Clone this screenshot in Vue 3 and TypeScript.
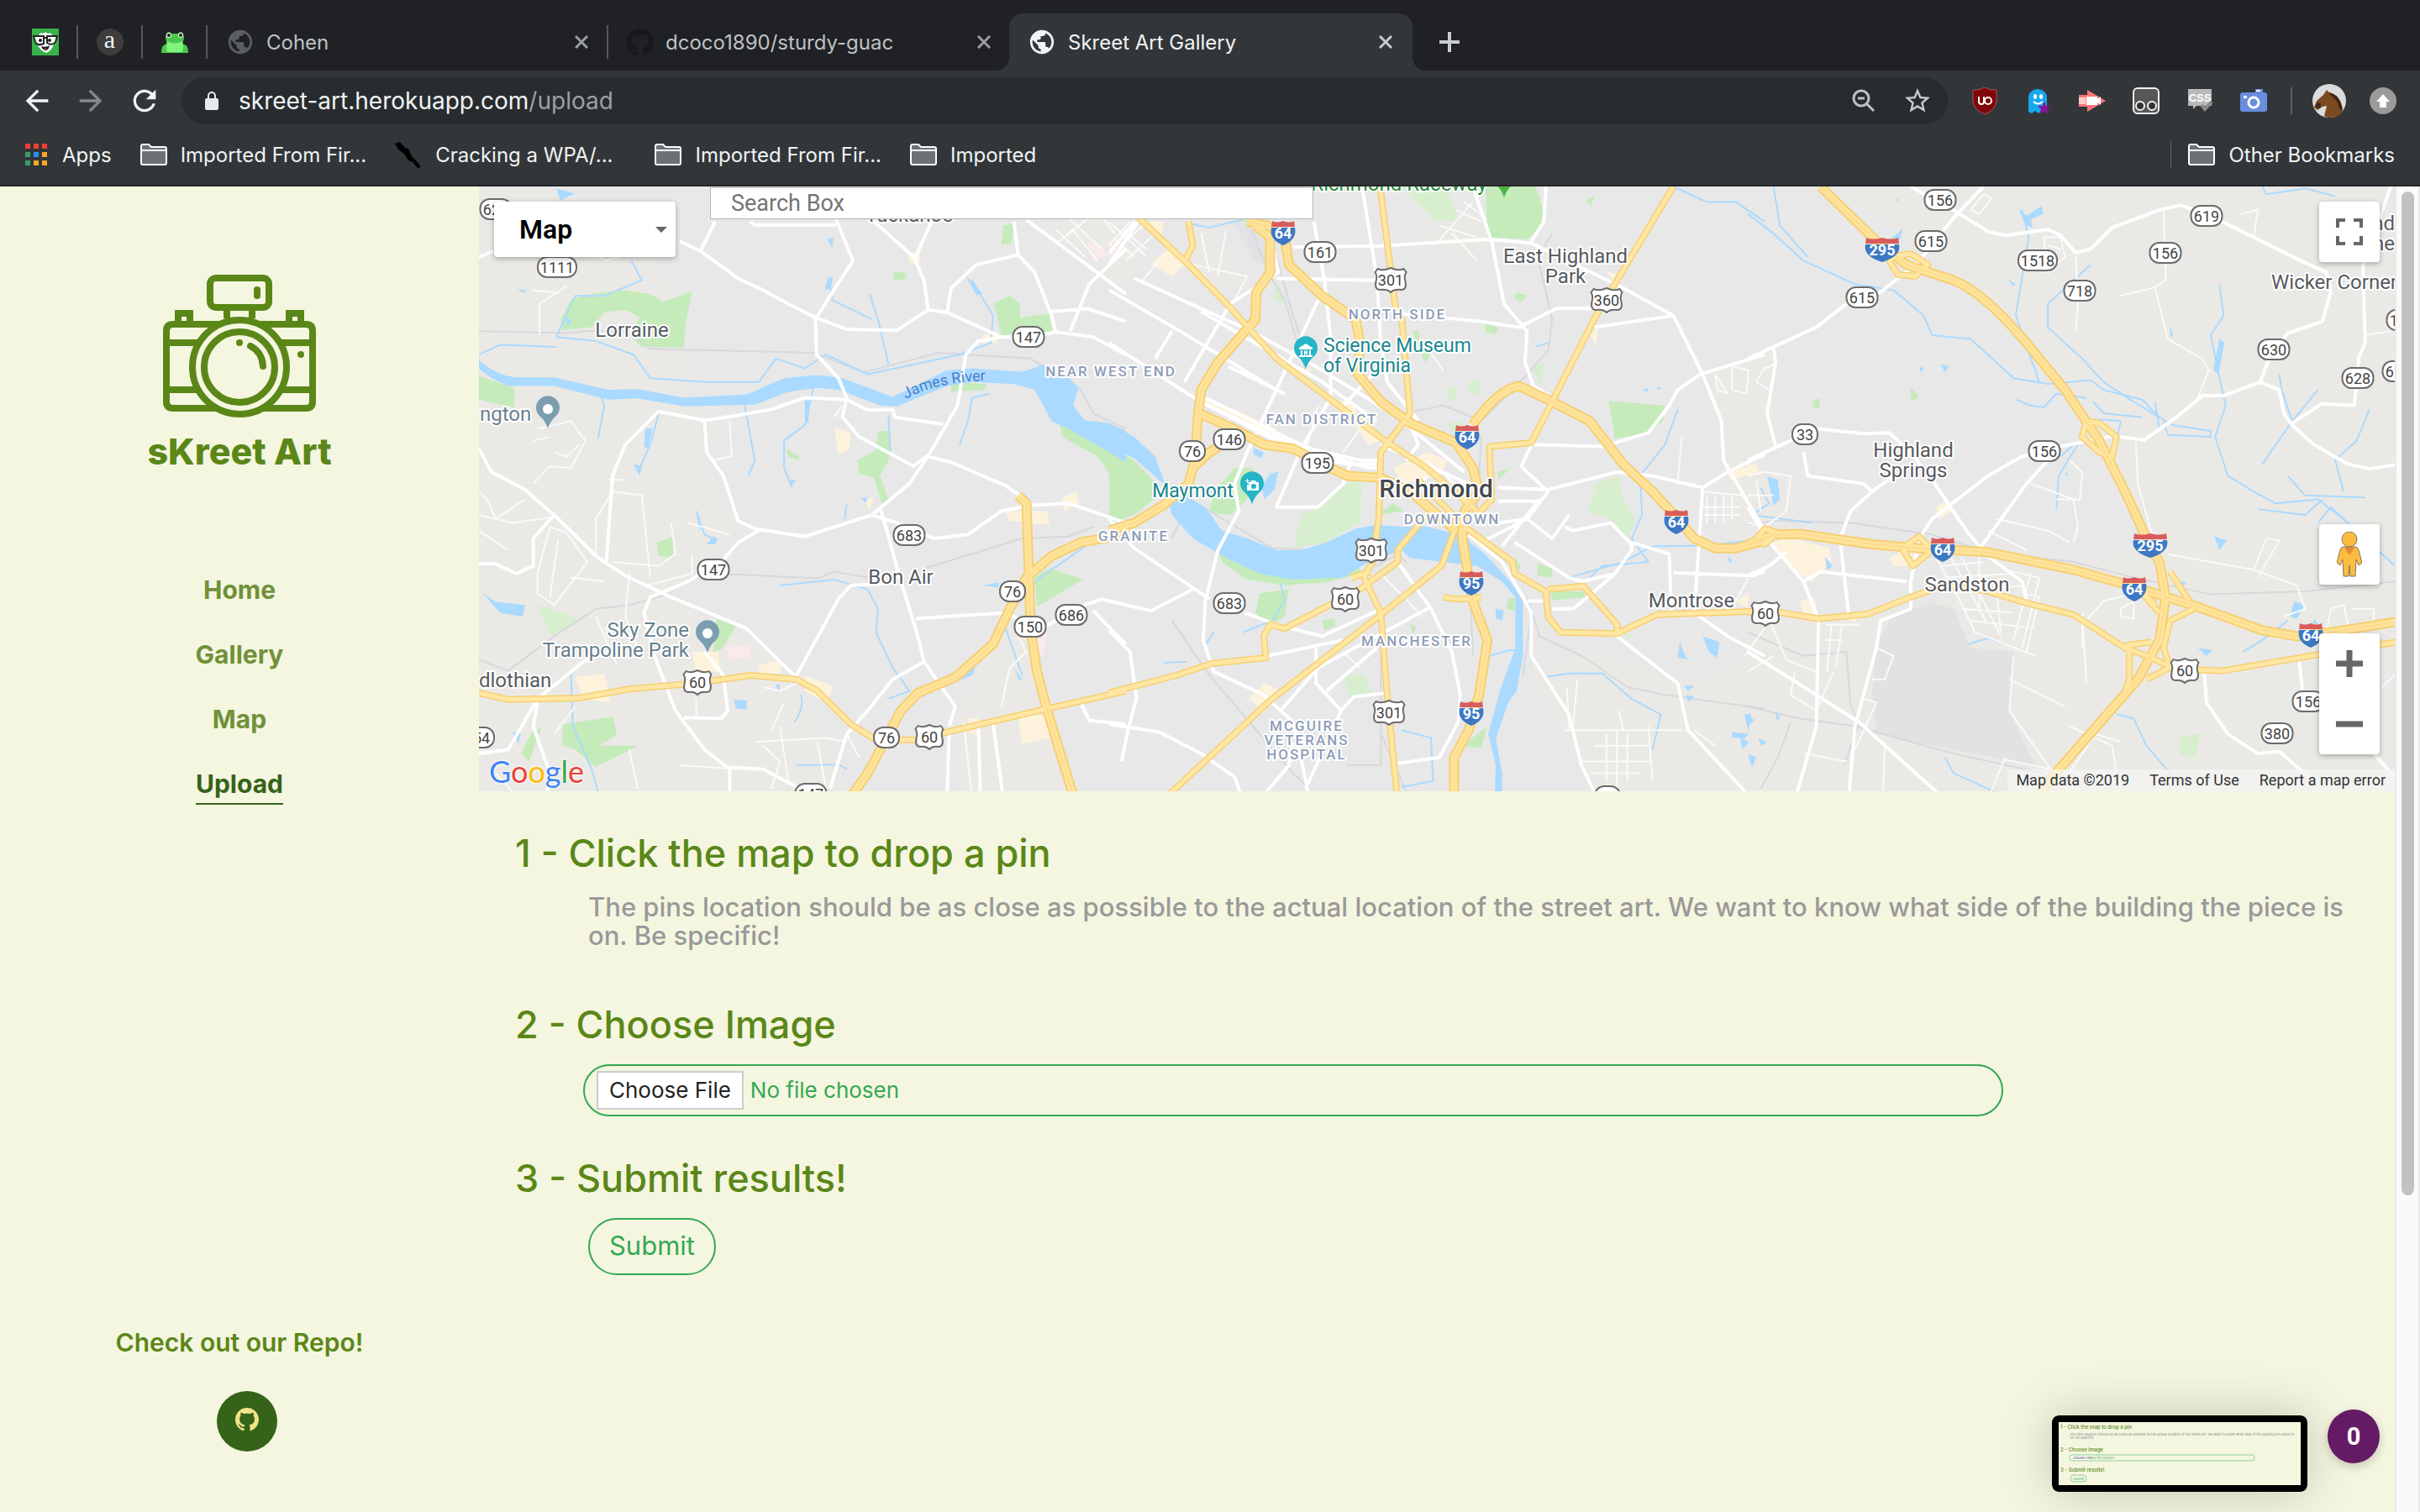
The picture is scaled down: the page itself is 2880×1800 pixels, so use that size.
<script setup lang="ts">
import { ref } from 'vue'

type TileId = 'A' | 'B' | 'C'

interface Tile {
  id: TileId
  x: number
  scale: number
  rural: string
  dark: string
  parks: string
  pale: string
  commercial: string
  medical: string
  lakes: string
  streams: string
  river: string
  rails: string
  streets: string
  roads: string
  highways: string
  freeways: string
}

interface Label {
  tile: TileId
  x: number
  y: number
  lines: string[]
  kind: 'town' | 'city' | 'area' | 'poi' | 'teal' | 'park'
  anchor?: 'start' | 'middle' | 'end'
}

interface Shield {
  tile: TileId
  x: number
  y: number
  text: string
  kind: 'state' | 'us' | 'interstate'
}

const TILE_Y = 0.4656

const tiles: Tile[] = [
  {
    id: 'A',
    x: -10,
    scale: 0.4974,
    rural:
      'M20,0V1568H910L850,1400 700,1180 480,1050 640,870 560,700 625,600 508,540V300L400,120 230,80 180,0z M1180,1568L1160,1360 1250,1160 1340,1120 1350,1300 1430,1568z M1390,130L1470,40 1568,60V220z',
    dark: '',
    parks:
      'M215,340L240,290 300,272 370,265 430,275 460,295 500,280 530,268 515,350 510,412 410,410 380,380 405,335 370,315 320,322 290,360 220,368z M20,485L105,515V565L20,545z M1252,300L1290,278 1315,300V335L1385,325 1392,370 1270,380z M1275,100L1300,95 1295,145 1270,150z M975,625H1005L1000,700 980,740 1000,800 985,815 965,745 930,735 925,700 970,675z M445,910L485,895V950L450,945z M1385,975L1465,1005 1355,1075 1350,1000z M590,1105L635,1125 600,1185 580,1190z M220,1375L340,1355 350,1400 310,1430 400,1430 300,1485 250,1440 220,1430z M150,1390L170,1385 140,1470 120,1450z M1410,610L1440,620 1528,665 1568,700V850L1530,845 1550,770 1500,690 1415,640z M1150,500L1235,505 1230,520 1150,525z M1015,218L1045,222 1038,240 1010,238z M755,670L785,690 785,700 760,690z',
    pale: 'M155,1070L265,1105 195,1150z',
    commercial:
      'M870,615L910,630 905,675 880,685z M250,1255L320,1245 335,1320 270,1310z M530,1190H590L600,1240 540,1240z M690,1225L740,1210 745,1245 690,1245z M800,1250L870,1280 850,1320 800,1290z M1280,830H1380L1385,865 1290,855z M1310,1355L1380,1350 1385,1410 1320,1425z M1050,170L1075,165V200L1050,195z M1415,795L1450,780 1455,810 1420,830z M940,800L965,795 955,830z M1225,380L1260,370 1260,400 1225,400z M1190,1360L1215,1360 1215,1400 1195,1400z',
    medical:
      'M610,1180L675,1170 665,1205 620,1210z M1475,140L1510,150 1525,175 1490,190z M1350,1140H1378L1370,1200 1350,1200z',
    lakes:
      'M205,5L250,18 215,35z M855,135L868,130 865,158z M1185,228L1225,275 1210,278z M418,620L435,618 425,670 415,665z M390,710L410,715 405,740z M30,1040L60,1062 130,1070 125,1100 70,1090z M800,545L812,550 808,605 800,600z M935,795L950,795 945,810z M1195,1215L1213,1215 1200,1250 1165,1265z M855,235L868,230 860,262 848,262z M112,262L135,266 125,271z M540,830L552,880 545,870z M580,895L592,900 586,915 565,915z M1225,1020L1265,1012 1262,1025z M630,1312L662,1315 660,1338 635,1335z M1300,1230L1320,1262 1312,1262z M100,1395L120,1400 115,1425z M225,335L240,340 235,360z M760,750L780,752 765,765z M730,1275L740,1272 738,1295z',
    streams:
      'M385,190L410,240 320,280 250,280 205,385 300,395 390,430 430,490 560,500 690,500 730,440 800,465 850,430 M955,275L975,340 1000,455 M860,250L865,290 960,340 M310,530L320,560 305,645 M655,555L680,700 665,740 M820,515L800,610 750,650V720L770,770 M1200,240L1250,330 1245,400 1170,430 950,480 850,430 M1000,585L1005,690 M1240,530L1200,540 1190,600 1170,660 M740,1020L870,1005 950,1030 975,1080 970,1140 1010,1230 1050,1290 1000,1310 M240,1240L245,1380 290,1490 310,1568 M450,580L430,660 400,730 M20,430L70,405 205,410 M900,810L895,850 M540,830L560,890 580,900 M1330,1070L1350,1010 1430,950 1490,905 M1320,1250L1290,1160 1280,1130 M790,1300Q800,1330 775,1370 M780,1480L880,1478 900,1490',
    river:
      'M10,435Q60,485 110,488L200,488 330,520 400,518 510,540 660,532 750,490 830,482 890,490 1010,538 1140,470 1200,465 1320,474 1370,456 1425,482 1455,515 1442,560 1470,598 1528,605 1568,625V705L1528,680 1440,625 1390,600 1350,520 1300,505 1200,500 1140,510 1020,562 980,560 880,520 830,515 760,525 680,558 510,562 400,542 330,545 200,510 90,510 50,490 10,458z',
    rails:
      'M20,370L230,375 300,368 380,372 430,415 820,425 940,475 1120,425 1340,440 1460,520 1490,580 1568,620 M20,1210L90,1238 200,1150 300,1080 380,1070 480,1040 M600,990L830,1002 870,985 950,1000 M1090,975L1320,900 1430,895 1490,870',
    streets:
      'M165,380V300L230,255 M150,265L210,272 M160,620L240,600 275,650 240,720 190,715 150,760 M190,640L150,650 M200,680L230,690 260,660 M20,840L100,860 200,845 M300,945V850L340,780 410,790 430,1000 M160,990L190,870 230,885 280,960 200,1070 160,1040z M210,900L190,1050 M340,960L450,970 490,940 480,860 M130,800L60,850 M520,860L620,890 M380,990L370,1100 400,1180 M300,1100L340,1200 350,1220 M320,1130L400,1150 M20,880L90,930 M240,1000L320,1010 M250,1330L200,1400 M700,1280L740,1290 780,1270 M720,1390L750,1320 M540,1310V1360 M680,1420L850,1410 900,1420 M760,1520L740,1380 M900,1400L930,1460 M700,1430L740,1470 720,1540 M1270,1330L1290,1230 1330,1190 1300,1130 M1180,1370L1200,1568 M1400,150L1440,110 1500,190 M1420,130L1540,30 M1430,80L1510,160 M1440,60L1480,30 1540,120 M1400,110L1470,180 M1450,100L1420,70 M870,590L890,560 M300,170L320,190 360,180 M620,600L625,690 580,700 M330,750H365 M20,780L40,800 60,850 M380,1440L400,1540 M830,1420L850,1540 M500,1480L640,1490 M420,1020L530,990 530,940 M60,1500L110,1560',
    roads:
      'M500,140L550,165 640,235 700,265 760,300 825,335 900,365 1020,368 1095,315 1140,322 1270,385 1340,385 1400,372 1490,385 1568,430 M585,90L550,165 M670,90L680,98 875,98 M875,85L915,190 860,280 825,340 828,430 880,490 900,540 890,590 930,640 1060,715 1090,690 1150,705 1280,765 1320,795 M1270,385L1215,395 1185,430 1165,560 1100,680 1050,760 960,840 800,895 680,875 640,855 605,740 565,680 560,600 M960,85L1060,180 1085,240 1095,315 M1105,85L1065,180 M1140,322L1150,260 1210,200 1310,175 1350,220 1390,330 1400,372 M1300,90L1310,175 M1330,85L1568,275 M1568,160L1480,250 1435,370 M1390,320L1475,312 1568,345 M20,670L50,730 130,775 210,850 300,945 370,995 480,1050 660,1130 740,1215 790,1265 M450,575L560,598 640,585 720,570 800,540 900,545 950,572 1010,570 1015,590 1130,608 M450,575L370,660 340,740 325,960 M690,880L640,910 605,955 520,1010 430,1050 415,1090 440,1200 490,1340 560,1440 620,1490V1568 M960,840L1020,860 1110,900 1190,890 1270,830 1340,815 1430,810 1568,860 M980,820L1030,1010 1070,1150 1085,1215 1160,1330 1145,1380 M780,1250L880,1055 910,1020 1000,1015 M1065,1105L1130,1100 1280,1090 1320,1110 M1375,1125L1470,1070 1510,1055 1568,1070 M1490,1085L1568,1170 M1085,1215L1010,1260 950,1340 900,1400 860,1540 M160,1320L150,1380 190,1500 180,1568 M20,965L60,965 110,990 150,970V900L200,840 M560,1190L605,1250 615,1340 600,1360 510,1358 M20,1450L90,1440 160,1310 270,1215 330,1190 M1145,1400L1140,1568 M1215,1380L1220,1568 M1250,1370L1275,1568 M1460,1320L1480,1365 1568,1375 M620,1485L700,1490 780,1535 M20,180L55,165',
    highways:
      'M20,1295L90,1312 260,1308 380,1285 540,1270 670,1250 780,1260 830,1290 910,1375 970,1415 1070,1415 1140,1395 1380,1335 1568,1290',
    freeways:
      'M1310,790L1330,810 1335,960 1340,1130 1355,1240 1380,1340 1445,1568 M1568,890L1460,910 1390,945 1330,1000 1290,1080 1250,1170 1160,1255 1070,1295 1030,1340 990,1420 950,1500 905,1568',
  },
  {
    id: 'B',
    x: 750,
    scale: 0.4974,
    rural:
      'M1000,1240L1180,1568H1568V1180L1400,1280 1180,1190z M1568,440L1420,480 1460,620 1480,900 1568,910z M190,110L260,110 310,200 340,250 250,270 190,200z M760,120L870,60 910,140 860,190 780,150z M0,60L90,110 60,235 0,260z',
    dark: 'M290,80L330,100 370,140 380,210 345,190z',
    parks:
      'M900,0H1020L1040,60 1030,110 1000,135 905,130z M0,665L60,700 130,780 60,840 0,860z M250,780L300,720 345,720 330,800 290,840 240,835z M255,910L290,950 400,990 560,1000 600,940 600,990 520,1012 420,1020 330,1005 270,960z M360,1040L430,1030 420,1100 380,1125 350,1090z M1195,548L1330,560 1325,600 1290,630 1210,645z M845,1430L905,1380 890,1435z M1025,965L1060,975V1000L1025,995z M1055,1035H1135L1140,1050 1060,1058z M640,840L680,810 705,830z M900,350L930,360 925,378 900,372z M975,270L1000,280 985,297 970,285z M725,370L740,368 745,420 770,430 755,450z M510,1110L540,1105 540,1125 515,1135z M720,1115L735,1130 725,1145z M970,950L985,970 980,985z M955,1055L975,1050 970,1085 950,1080z M1140,35L1160,25 1152,50z M690,890L740,870 690,940z M930,730L960,720 930,750z M310,85H380L350,100z',
    pale: 'M700,0L810,10 835,85 780,90z M460,840L520,800 580,750 605,760 600,860 520,910 440,925z M1165,760L1220,740 1230,800 1260,850 1240,900 1200,850 1145,830z M560,1250L610,1245 630,1300 575,1315z M860,495L890,500 885,535 858,525z M810,510L830,512 828,548 810,540z M1010,455L1042,450 1030,510z M395,270L405,250 420,295 395,295z M810,605L840,600 860,640 820,630z M1230,1140L1250,1145 1240,1160z',
    commercial:
      'M1480,730L1550,710 1555,730 1485,750z M680,720L760,680 810,700 790,740 700,760z M550,550L580,545 600,600 650,650 620,660z M100,200L140,160 180,200 150,230z M70,90H130L125,130z M335,1310L370,1270 415,1290 370,1345z M1150,380L1170,360 1165,410z M230,540L300,570 400,620V640L230,560z M1190,215L1215,225 1210,250z M1500,1060L1530,1040 1528,1080z M430,470L480,460 480,485z',
    medical: 'M0,140L40,180 0,185z',
    lakes:
      'M345,668L370,680 365,695 345,685z M385,735L405,728 395,775 370,800 365,765z M925,1080L945,1085 940,1110 925,1105z M1420,1150L1460,1165 1455,1205 1435,1190z M1365,1165L1380,1205 1395,1210 1360,1205z M1480,945L1490,955 1485,965z M1278,518L1292,515 1285,525z M1310,515L1322,512 1315,522z M1375,1275L1400,1278 1385,1290z M1490,1395L1530,1400 1520,1412 1490,1408z M1380,1300L1400,1305 1385,1318z M1520,1350L1535,1348 1530,1395z M1510,1410L1530,1420 1515,1440z',
    streams:
      'M1350,0L1430,40 1500,40 1568,90 M1360,570L1330,660 1270,740 1275,840 1250,900 1290,960 1180,970 1140,1010 M1100,1000L1230,960 1300,920 1440,918 1568,900 M190,95L240,105 320,85 M410,1015L420,1060 390,1110 320,1140 M1040,1255L1100,1245 1180,1245 1250,1310 1320,1350 1300,1440 M900,1260L910,1200 960,1185 990,1190 M700,1390L770,1410 775,1520 700,1535 M1020,410L1050,400 M250,1140L225,1180 M130,1218L185,1215',
    river:
      'M0,605L60,640 110,690 130,750 180,790 230,820 270,880 330,900 400,930 460,930 520,910 590,875 640,865 700,870 760,870 840,890 900,940 960,1010 990,1060V1200L975,1290 955,1320 925,1410 940,1500V1568H922L925,1480 907,1400 935,1290 972,1180 972,1050 940,1010 880,970 800,960 720,950 700,930 620,960 560,1000 440,1005 360,990 280,950 200,900 150,840 130,760 60,695 0,665z',
    rails:
      'M400,180L440,330 480,460 M185,820L150,900 M240,900L400,970 M880,830L890,650 870,590 800,560 730,575 M1060,120L1025,180 1060,340 1050,420 1000,480 890,600 M1000,1050L1030,1150 1130,1200 1240,1280 1330,1300 1568,1335 M1010,1090L990,1250 M150,1110L240,1250 440,1500 480,1540 M860,900L870,1200 M710,960L690,940 640,970 520,930 390,925 240,830 180,800 M650,1200V1480H570 M650,1400L720,1568 M340,110L380,220 420,290 470,470',
    streets:
      'M0,90L90,180 M20,160L80,100 M40,190L110,120 M10,130L60,180 M30,110L90,160 M50,90L0,150 M80,240L120,190 M200,200L330,230 300,290 M220,120L240,220 M280,110L260,230 M780,150L870,40 M790,100L880,130 M830,60L890,90 M850,40L900,80 M820,120L880,190 M1370,640L1360,760 1400,760 M1415,780L1520,790 M1430,790V860 M1450,790V860 M1470,790V860 M1490,790V850 M1420,820H1510 M1425,840H1510 M1450,480L1480,530 1455,520z M1490,460L1530,470 1525,530 1490,520z M1090,1390H1370 M1190,1400V1520 M1215,1390V1540 M1240,1400V1520 M1160,1430H1290 M1130,1470H1300 M1150,1500H1270 M1220,1340L1230,1390 M1290,1380L1300,1520 M1095,1280L1100,1390 M1120,1260L1110,1380 M750,400L800,470 M650,990L750,1100 M560,1190L600,1230 M800,730L820,760 M760,700L830,760 M600,620L560,680 M500,560L470,680 M360,620L330,680 M290,590L270,640 M1520,1200L1568,1130 M1050,1060L1060,1120 M1400,1390L1450,1430 M1530,1000L1500,1060',
    roads:
      'M440,155L650,152 910,135 1010,145 1230,260 1350,330 1420,480 1465,600 1470,700 1568,880 M490,90L515,240 530,390V540 M400,235L640,240 M605,0L640,230 650,400 665,500 740,600 M870,0L915,140 945,300 1000,370 995,450 1015,510 1060,540 M690,325L890,345 980,360 1070,312H1165 M1160,360L1350,330 M0,265L170,370 400,520 M0,400L210,545 470,690 570,710H640 M150,370L110,440 M0,170L60,90 M60,235L340,370 M500,290L400,520 330,680 300,760 310,830 260,930 230,1060 225,1160 250,1240 370,1300 440,1370 480,1568 M390,150L405,220 290,300 180,500 M285,460L420,530 M220,320L510,500 640,600 M340,370L510,470 720,610 740,660 710,700 M640,470L560,560 M530,540L460,670 400,820H500L560,760 580,700 M230,540L420,640 480,670 600,700H650 M235,560L440,660 620,720H650 M650,660L880,770 M700,600L850,730 M930,770L1050,775 1215,730 1300,740 1420,770 1480,730 1568,685 M990,720L1050,780 1000,850 900,905 M930,805H1030 M930,860L1000,850 1060,900 1100,840 M1015,660L1180,665 1290,630 1340,560 1360,520 1415,480 1568,430 M985,720L1010,660 M860,890L940,960 985,1040 1010,1090V1200L1100,1350 1130,1480 1170,1568 M690,960L770,1080 820,1190 840,1300 835,1370 790,1460 690,1475 M0,1060L100,1085 200,1030 M60,925L240,1055 M325,1090L400,1120 510,1150 650,1080 M0,850L60,925 M380,1200L560,1160 M495,1180V1270L555,1340 M410,1340L500,1230 770,1075 M520,1290L640,1180 M0,1135L50,1190 65,1310 45,1390 30,1470 M0,1375L120,1395 220,1450 300,1510 320,1568 M360,1568L430,1480 440,1420 M470,1540L555,1340 585,1305 660,1295 M970,910L1100,1000 1130,1010 1210,990 1250,930V910L1340,940 1345,1090 M1090,870L1110,880 1200,860 1250,915 M1350,988L1540,995 1568,985 M1420,770L1400,1090 1480,1150 1568,1200 M1060,1080H1110L1150,1045 1210,990 M1215,1150L1360,1270 1385,1390 1540,1568 M1030,800L940,920 M1045,0L1040,90 1010,140 M1000,1060H1050 M0,200L100,40 M760,740L720,800',
    highways:
      'M70,80L190,200 290,310 400,440 530,545 660,650 760,720 880,830 M740,750L850,870 965,960 970,990 1045,1035 1050,1100 1080,1140 1215,1143 1310,1095 1568,1085 M190,90L200,150 180,195 M648,0L685,310 700,340 720,580 650,680 645,850 630,960 610,1000 650,1090 665,1300 690,1568 M1350,0L1215,240 1165,330 1060,550 1010,655 910,665 915,800 880,840 M0,1295L160,1250 245,1220 375,1205 370,1150 385,1120 420,1130 600,1030 690,960V930L760,840 M130,1568L390,1310 650,1095 795,970 830,870 M1050,1030L1135,1022 1215,1120V1143 M800,1050Q840,1060 890,1050 M580,1000L625,985',
    freeways:
      'M350,100L385,130V220L352,270 350,340 260,450 220,520 212,590 205,700 190,760 130,815 60,860 0,880 M420,130L430,200 510,280 590,340 600,400 595,480 650,550 720,605 830,655 870,720 885,780 850,830 845,900 860,1000 870,1060 905,1160 885,1300 860,1390 825,1460V1568 M870,610Q930,520 980,510L1060,550 1150,600 1230,710 1300,780 1360,850 1400,900 1450,925 1500,925 1568,905 M215,580L300,620 370,660 440,670 510,710 570,740 650,745 720,780 830,880 M330,90L380,100 420,130 M205,715L240,680 290,645',
  },
  {
    id: 'C',
    x: 1510,
    scale: 0.5102,
    rural:
      'M210,0L560,300 730,520 850,720 940,920 760,960 600,910 420,1080 330,1090 200,1110 0,1110V1568H1512V0z M0,700L100,740 120,860 0,860z M0,440L60,420 60,660 0,700z',
    dark: 'M290,1290L300,1170 340,1090 430,1065 480,1080 520,1180 620,1190 610,1340 670,1480 480,1440 300,1400z',
    parks:
      'M152,545L168,543 167,567 152,565z M380,515L398,535 388,550 380,540z',
    pale: 'M1010,1405L1055,1400 1045,1460 1008,1455z',
    commercial:
      'M50,915L90,895 190,925 195,960 150,1010 100,980z M330,950L380,920 390,970 340,970z M440,820L465,800 475,830 445,852z M120,1060L155,1050 165,1100 130,1090z M220,1095L260,1090 250,1115z M0,710L25,712 0,740z',
    medical: '',
    lakes:
      'M630,55L650,75 685,50 690,70 660,85 665,105 650,100z M45,740L70,750 75,800 60,815z M332,135L362,108 355,135z M1100,390L1112,400 1098,480 1086,470z M1088,895L1118,905 1100,930z M1275,1060L1300,1072 1280,1105 1265,1100z M1050,1180L1085,1185 1070,1200z M180,945L198,970 185,980z M985,355L992,380 986,385z M450,455L470,460 460,475z M605,235L625,250 618,255z M1005,1010L1025,1012 1010,1025z M0,1350L15,1365 5,1375z M25,1410L45,1420 30,1430z M65,1340L75,1360 68,1365z M0,1450L20,1460 10,1485z M1320,1105L1332,1120 1318,1118z M400,460L412,465 402,475z M345,35L352,30 349,38z M740,730L748,735 742,740z',
    streams:
      'M0,70L60,120 130,190 250,250 340,265 410,330 430,380 520,390 620,490 700,505 800,495 830,520 920,545 960,590 M60,0L75,100 140,180 M640,60L655,130 625,330 680,500 M800,200L700,300V360L780,440 830,500 900,550 990,610 1080,625 1080,640 980,635 970,600 M1100,250L1110,330 1080,380 1100,490 1115,560 1090,640 1120,740 1180,780 M1450,570L1420,650 1370,700 1390,780 M1330,520L1270,600 1200,710 M1180,780L1230,810 1330,800 1400,860 1480,940 1509,970 M1190,825L1300,840 1340,800 M1260,740L1300,790 1440,795 M1400,860L1360,820 1330,860 M860,1350L900,1360 930,1430 985,1500 M460,1460L480,1500 600,1560 M515,1170L560,1155 600,1170 M625,545L660,560 690,565 720,530 790,540 M805,550L830,580 920,590 M1200,0L1210,20 1300,5 1370,25 M1155,1190L1200,1160 1260,1110 M720,825L725,740 770,660 M730,690L760,660 M30,770L50,810 10,840 150,860 M950,550L960,620 M1240,480L1245,520 1270,600 M820,595L870,600 860,650',
    river: '',
    rails:
      'M0,865L60,855 240,860 430,890 560,935 760,960 900,1000 1080,1043 1300,1035 1509,1010 M0,1330L120,1360 250,1380 480,1450 690,1500 M0,1140L130,1200 230,1190 240,1330 260,1370 225,1480 M100,1370L70,1460 30,1540',
    streets:
      'M40,460L20,500 50,520 M60,455L35,470 M520,60L550,20 570,30 540,70z M690,130L730,130 740,180 700,220z M700,150L730,160 M765,180L770,300 765,370 M970,60L975,240 945,260 865,280 M950,260L980,390 1060,440 1075,470 1050,540 M905,655L910,760 950,920 M660,760L760,800 770,870 760,910 M750,700L780,730 775,800 720,800 M580,850L700,880 750,910 M560,880L650,930 M1180,130L1190,60 1150,70 M1180,980L1210,900 1240,905 1190,1000 M980,940L1180,980 1280,1020 1300,1080 1250,1100 M440,950L500,1070 530,1140 670,1200 M470,940L560,1120 M500,950L590,1150 M450,970L550,960 M460,1000L620,990 M480,1040L640,1020 M500,1080L620,1090 M520,1110L670,1130 M600,980L680,1000 640,1180 M660,990L620,1160 M540,940L540,1090 M580,1030L590,1140 M640,1040L680,1050 650,1190 M780,1180V1120L830,1060 900,1040 M870,1080L870,1100 900,1105 900,1060z M790,1270L780,1090 M195,1120L185,1240 M220,1120L205,1230 M180,1120H260 M180,1160H220 M300,1180L340,1200 320,1260 290,1260 M20,1120L40,1080 90,1210 160,1240 M110,1240L100,1300 160,1340 200,1240 M270,1310L300,1320 250,1440 M610,1260L740,1330 M620,1200L610,1340 700,1480 750,1550 M600,1465L750,1500 810,1400 870,1420 M130,1450L230,1470 M320,1420L315,1568 M1360,1080L1390,1070 1400,1120 1350,1140 1360,1080 M1410,1080L1460,1080 1460,1110 1410,1120 M0,740L40,730 100,740 90,830 40,870 0,860 M0,790L60,790 M20,750L30,830 M1480,1280L1509,1250 M750,1380L850,1430 860,1500 M560,1568L600,1460 M1440,380L1500,370 M0,1240L60,1200',
    roads:
      'M380,0L480,60 560,115 600,125 700,110 730,125 765,170 800,160 850,105 960,60 1010,48 1070,70 1180,130 1300,195 1350,220 1360,270 1340,345 1260,375 1220,430 1195,500 1110,535H1060L1000,590 925,648 850,638 730,665 640,690 560,740 430,850 400,900 380,1010V1080L310,1110 300,1180 250,1380 235,1568 M550,0L480,80 400,190 310,270 230,300 160,360 0,440 M60,410L65,450 45,580 65,665 M0,700L130,635 170,620 270,632 330,630 380,680 430,750 510,880 560,945 640,1010 650,1055 M130,680L140,740 270,760 290,780 340,740 M290,780L240,830 215,900 235,1090 M700,700L650,760 545,920 M1195,500L1240,520 1250,580 1270,610 1320,660 1400,710 1450,722 1509,712 M1270,605L1340,555 1415,560 1425,440 1440,400 1435,200 1500,0 M0,820L40,895 130,1010 165,1110 160,1380 110,1568 M0,995L50,970 90,935 M130,1010L170,985 370,1010 M0,1190L160,1300 260,1370 460,1568 M1065,1245L1070,1320 1120,1400 1190,1450 1240,1445 1320,1520 M1285,1200L1295,1300 M1420,1400L1509,1510',
    highways:
      'M0,1088L80,1090 165,1105 280,1093 380,1050 460,1020 560,1035 650,1065 760,1095 880,1180 930,1200 1000,1235 1110,1238 1340,1195 1512,1165 M330,190L350,225 390,230 420,200 380,172 340,178z M780,640L820,680 850,690 860,640 820,605 790,600z M360,925L385,970 430,930 400,895z M20,900L40,875 70,885 40,915z M920,1040L960,1090 M985,985L1030,1060 M1040,1080L985,1110 970,1180 985,1230 930,1260 M900,1010L950,1070 M880,1175L905,1170 940,1165 M890,1180L890,1260 880,1290',
    freeways:
      'M170,0L300,140 370,200 480,240 Q550,270 650,400L740,520 820,650 880,780 930,900 960,960 975,1050 960,1160 910,1260 830,1360 710,1510 670,1568 M0,915L60,890 120,888 290,915 400,925 560,935 760,980 890,1020 1050,1075 1200,1135 1280,1150 1360,1140 1512,1113',
  },
]

const labels: Label[] = [
  { tile: 'A', x: 387, y: 384, lines: ['Lorraine'], kind: 'town' },
  { tile: 'A', x: 1030, y: 1015, lines: ['Bon Air'], kind: 'town' },
  { tile: 'A', x: 20, y: 1281, lines: ['dlothian'], kind: 'town', anchor: 'start' },
  { tile: 'A', x: 22, y: 600, lines: ['ngton'], kind: 'poi', anchor: 'start' },
  { tile: 'A', x: 523, y: 1151, lines: ['Sky Zone', 'Trampoline Park'], kind: 'poi', anchor: 'end' },
  { tile: 'A', x: 1050, y: 91, lines: ['Tuckahoe'], kind: 'town' },
  { tile: 'B', x: 1091, y: 195, lines: ['East Highland', 'Park'], kind: 'town' },
  { tile: 'B', x: 1393, y: 1076, lines: ['Montrose'], kind: 'town' },
  { tile: 'B', x: 783, y: 794, lines: ['Richmond'], kind: 'city' },
  { tile: 'B', x: 4, y: 486, lines: ['NEAR WEST END'], kind: 'area' },
  { tile: 'B', x: 59, y: 906, lines: ['GRANITE'], kind: 'area' },
  { tile: 'B', x: 689, y: 340, lines: ['NORTH SIDE'], kind: 'area' },
  { tile: 'B', x: 509, y: 608, lines: ['FAN DISTRICT'], kind: 'area' },
  { tile: 'B', x: 820, y: 864, lines: ['DOWNTOWN'], kind: 'area' },
  { tile: 'B', x: 735, y: 1175, lines: ['MANCHESTER'], kind: 'area' },
  { tile: 'B', x: 472, y: 1392, lines: ['MCGUIRE', 'VETERANS', 'HOSPITAL'], kind: 'area' },
  { tile: 'B', x: 513, y: 423, lines: ['Science Museum', 'of Virginia'], kind: 'teal', anchor: 'start' },
  { tile: 'B', x: 298, y: 795, lines: ['Maymont'], kind: 'teal', anchor: 'end' },
  { tile: 'B', x: 694, y: 10, lines: ['Richmond Raceway'], kind: 'park' },
  { tile: 'C', x: 387, y: 691, lines: ['Highland', 'Springs'], kind: 'town' },
  { tile: 'C', x: 511, y: 1036, lines: ['Sandston'], kind: 'town' },
  { tile: 'C', x: 1222, y: 262, lines: ['Wicker Corner'], kind: 'town', anchor: 'start' },
  { tile: 'C', x: 1509, y: 112, lines: ['nd', 'ne'], kind: 'town', anchor: 'end' },
]

const shields: Shield[] = [
  { tile: 'A', x: 60, y: 58, text: '620', kind: 'state' },
  { tile: 'A', x: 208, y: 207, text: '1111', kind: 'state' },
  { tile: 'A', x: 1335, y: 385, text: '147', kind: 'state' },
  { tile: 'A', x: 1049, y: 892, text: '683', kind: 'state' },
  { tile: 'A', x: 581, y: 979, text: '147', kind: 'state' },
  { tile: 'A', x: 1297, y: 1036, text: '76', kind: 'state' },
  { tile: 'A', x: 1339, y: 1126, text: '150', kind: 'state' },
  { tile: 'A', x: 1437, y: 1095, text: '686', kind: 'state' },
  { tile: 'A', x: 995, y: 1410, text: '76', kind: 'state' },
  { tile: 'A', x: 26, y: 1408, text: '54', kind: 'state' },
  { tile: 'A', x: 814, y: 1553, text: '147', kind: 'state' },
  { tile: 'A', x: 542, y: 1268, text: '60', kind: 'us' },
  { tile: 'A', x: 1098, y: 1406, text: '60', kind: 'us' },
  { tile: 'B', x: 504, y: 168, text: '161', kind: 'state' },
  { tile: 'B', x: 288, y: 647, text: '146', kind: 'state' },
  { tile: 'B', x: 199, y: 676, text: '76', kind: 'state' },
  { tile: 'B', x: 499, y: 707, text: '195', kind: 'state' },
  { tile: 'B', x: 287, y: 1065, text: '683', kind: 'state' },
  { tile: 'B', x: 1192, y: 1560, text: '', kind: 'state' },
  { tile: 'B', x: 674, y: 238, text: '301', kind: 'us' },
  { tile: 'B', x: 1190, y: 290, text: '360', kind: 'us' },
  { tile: 'B', x: 628, y: 929, text: '301', kind: 'us' },
  { tile: 'B', x: 565, y: 1054, text: '60', kind: 'us' },
  { tile: 'B', x: 670, y: 1344, text: '301', kind: 'us' },
  { tile: 'B', x: 417, y: 118, text: '64', kind: 'interstate' },
  { tile: 'B', x: 857, y: 640, text: '64', kind: 'interstate' },
  { tile: 'B', x: 1357, y: 857, text: '64', kind: 'interstate' },
  { tile: 'B', x: 867, y: 1014, text: '95', kind: 'interstate' },
  { tile: 'B', x: 867, y: 1346, text: '95', kind: 'interstate' },
  { tile: 'C', x: 448, y: 35, text: '156', kind: 'state' },
  { tile: 'C', x: 427, y: 139, text: '615', kind: 'state' },
  { tile: 'C', x: 266, y: 284, text: '615', kind: 'state' },
  { tile: 'C', x: 677, y: 190, text: '1518', kind: 'state' },
  { tile: 'C', x: 775, y: 267, text: '718', kind: 'state' },
  { tile: 'C', x: 974, y: 170, text: '156', kind: 'state' },
  { tile: 'C', x: 1071, y: 76, text: '619', kind: 'state' },
  { tile: 'C', x: 1226, y: 417, text: '630', kind: 'state' },
  { tile: 'C', x: 1422, y: 489, text: '628', kind: 'state' },
  { tile: 'C', x: 1517, y: 473, text: '628', kind: 'state' },
  { tile: 'C', x: 1527, y: 342, text: '156', kind: 'state' },
  { tile: 'C', x: 134, y: 633, text: '33', kind: 'state' },
  { tile: 'C', x: 692, y: 676, text: '156', kind: 'state' },
  { tile: 'C', x: 1308, y: 1317, text: '156', kind: 'state' },
  { tile: 'C', x: 1234, y: 1398, text: '380', kind: 'state' },
  { tile: 'C', x: 42, y: 1090, text: '60', kind: 'us' },
  { tile: 'C', x: 1020, y: 1237, text: '60', kind: 'us' },
  { tile: 'C', x: 314, y: 161, text: '295', kind: 'interstate' },
  { tile: 'C', x: 939, y: 918, text: '295', kind: 'interstate' },
  { tile: 'C', x: 455, y: 928, text: '64', kind: 'interstate' },
  { tile: 'C', x: 902, y: 1028, text: '64', kind: 'interstate' },
  { tile: 'C', x: 1314, y: 1147, text: '64', kind: 'interstate' },
]

const pins: { tile: TileId; x: number; y: number; color: string; icon: 'dot' | 'museum' | 'camera' | 'none' }[] = [
  { tile: 'A', x: 185, y: 618, color: '#7b9eb0', icon: 'dot' },
  { tile: 'A', x: 567, y: 1192, color: '#7b9eb0', icon: 'dot' },
  { tile: 'B', x: 470, y: 465, color: '#25b4c8', icon: 'museum' },
  { tile: 'B', x: 342, y: 812, color: '#25b4c8', icon: 'camera' },
  { tile: 'B', x: 944, y: 28, color: '#4db546', icon: 'none' },
]

function place(tile: TileId, x: number, y: number): [number, number] {
  const t = tiles.find((item) => item.id === tile)!
  return [Math.round(t.x + x * t.scale), Math.round(y * TILE_Y)]
}

function shieldWidth(s: Shield): number {
  if (s.kind === 'interstate') return s.text.length > 2 ? 42 : 30
  if (s.kind === 'us') return s.text.length > 2 ? 37 : 33
  return [30, 30, 30, 37, 46][s.text.length]
}

function shieldTransform(s: Shield): string {
  const [x, y] = place(s.tile, s.x, s.y)
  return `translate(${x} ${y})`
}

function usPath(w: number): string {
  const h = w / 2
  return `M${-h + 3},-13 Q${-h / 2},-10 0,-14 Q${h / 2},-10 ${h - 3},-13 L${h},-9 Q${h - 3},-4 ${h - 1},2 Q${h + 1},12 ${h - 6},12 Q4,11 0,15 Q-4,11 ${-h + 6},12 Q${-h - 1},12 ${-h + 1},2 Q${-h + 3},-4 ${-h},-9z`
}

function interstateTop(w: number): string {
  const h = w / 2
  return `M${-h + 2},-14 Q${-h / 2},-11 0,-14 Q${h / 2},-11 ${h - 2},-14 L${h - 1},-7 H${-h + 1}z`
}

function interstateBody(w: number): string {
  const h = w / 2
  return `M${-h + 1},-6 H${h - 1} Q${h + 2},8 0,15 Q${-h - 2},8 ${-h + 1},-6z`
}

const layers = ['rural', 'dark', 'parks', 'pale', 'commercial', 'medical', 'rails', 'river', 'streams', 'lakes', 'streets', 'roads'] as const
const trafficLayers = [
  ['highways', 'highway-casing'],
  ['freeways', 'freeway-casing'],
  ['highways', 'highway'],
  ['freeways', 'freeway'],
  ['freeways', 'freeway-line'],
] as const

const mapType = ref('Map')
const search = ref('')
const navLinks = ['Home', 'Gallery', 'Map', 'Upload']
const current = 'Upload'

const githubPath =
  'M8 0C3.58 0 0 3.58 0 8c0 3.54 2.29 6.53 5.47 7.59.4.07.55-.17.55-.38 0-.19-.01-.82-.01-1.49-2.01.37-2.53-.49-2.69-.94-.09-.23-.48-.94-.82-1.13-.28-.15-.68-.52-.01-.53.63-.01 1.08.58 1.23.82.72 1.21 1.87.87 2.33.66.07-.52.28-.87.51-1.07-1.78-.2-3.64-.89-3.64-3.95 0-.87.31-1.59.82-2.15-.08-.2-.36-1.02.08-2.12 0 0 .67-.21 2.2.82.64-.18 1.32-.27 2-.27s1.36.09 2 .27c1.53-1.04 2.2-.82 2.2-.82.44 1.1.16 1.92.08 2.12.51.56.82 1.27.82 2.15 0 3.07-1.87 3.75-3.65 3.95.29.25.54.73.54 1.48 0 1.07-.01 1.93-.01 2.2 0 .21.15.46.55.38A8.01 8.01 0 0 0 16 8c0-4.42-3.58-8-8-8z'
const globePath =
  'M12 2C6.48 2 2 6.48 2 12s4.48 10 10 10 10-4.48 10-10S17.52 2 12 2zm-1 17.93c-3.95-.49-7-3.85-7-7.93 0-.62.08-1.21.21-1.79L9 15v1c0 1.1.9 2 2 2v1.93zm6.9-2.54c-.26-.81-1-1.39-1.9-1.39h-1v-3c0-.55-.45-1-1-1H8v-2h2c.55 0 1-.45 1-1V7h2c1.1 0 2-.9 2-2v-.41c2.93 1.19 5 4.06 5 7.41 0 2.08-.8 3.97-2.1 5.39z'
</script>

<template>
  <div class="browser">
    <header class="chrome">
      <div class="tabs">
        <a class="pinned" href="#" aria-label="Pinned site">
          <svg width="32" height="32" viewBox="0 0 32 32">
            <rect width="32" height="32" fill="#37b34a" />
            <path d="M8 8Q10 4 13 6 16 3 19 6 23 4 25 9L26 18Q24 26 17 29 9 26 6 18z" fill="#fff" />
            <path d="M2 9h12v9q-8 3-10-2zM18 9h12l-2 7q-4 5-10 1zM14 11h4" fill="#fff" stroke="#222" stroke-width="2" />
            <circle cx="10" cy="14" r="2" fill="#222" /><circle cx="21" cy="14" r="2" fill="#222" />
            <path d="M11 21q6 2 10-1-1 6-5 6-4-1-5-5z" fill="#222" /><path d="M14 24q2-1 4 0-1 2-4 0z" fill="#e33" />
          </svg>
        </a>
        <a class="pinned" href="#" aria-label="Pinned site">
          <span class="letter-icon">a</span>
        </a>
        <a class="pinned" href="#" aria-label="Pinned site">
          <svg width="32" height="32" viewBox="0 0 32 32">
            <path d="M5 12C5 8 6 4 9 4q2 0 3 2h8q1-2 3-2c3 0 4 4 4 8l-2 6q7 1 7 9v2H0v-2q0-8 7-9z" fill="#4cc64c" />
            <path d="M7 15q9 5 18 0 2 6 0 13H7q-2-7 0-13z" fill="#7ef57e" />
            <circle cx="9" cy="8" r="3" fill="#eafbe0" /><circle cx="23" cy="8" r="3" fill="#eafbe0" />
            <circle cx="9" cy="8" r="2" fill="#222" /><circle cx="23" cy="8" r="2" fill="#222" />
          </svg>
        </a>
        <div class="tab first">
          <svg width="34" height="34" viewBox="0 0 24 24" fill="#5b5e63"><path :d="globePath" /></svg>
          <span>Cohen</span>
          <button aria-label="Close tab"><svg width="16" height="16" viewBox="0 0 16 16"><path d="M1 1l14 14M15 1L1 15" /></svg></button>
        </div>
        <div class="tab">
          <svg width="32" height="32" viewBox="0 0 16 16" fill="#17181a"><path :d="githubPath" /></svg>
          <span>dcoco1890/sturdy-guac</span>
          <button aria-label="Close tab"><svg width="16" height="16" viewBox="0 0 16 16"><path d="M1 1l14 14M15 1L1 15" /></svg></button>
        </div>
        <div class="tab active">
          <svg width="34" height="34" viewBox="0 0 24 24" fill="#f1f3f4"><path :d="globePath" /></svg>
          <span>Skreet Art Gallery</span>
          <button aria-label="Close tab"><svg width="16" height="16" viewBox="0 0 16 16"><path d="M1 1l14 14M15 1L1 15" /></svg></button>
        </div>
        <button class="new-tab" aria-label="New tab">
          <svg width="24" height="24" viewBox="0 0 24 24"><path d="M12 0v24M0 12h24" stroke="#c8cbcf" stroke-width="4" /></svg>
        </button>
      </div>

      <div class="toolbar">
        <button aria-label="Back"><svg width="40" height="40" viewBox="0 0 24 24" fill="#f1f3f4"><path d="M20 11H7.83l5.59-5.59L12 4l-8 8 8 8 1.41-1.41L7.83 13H20v-2z" /></svg></button>
        <button aria-label="Forward"><svg width="40" height="40" viewBox="0 0 24 24" fill="#85888c"><path d="M12 4l-1.41 1.41L16.17 11H4v2h12.17l-5.58 5.59L12 20l8-8z" /></svg></button>
        <button aria-label="Reload"><svg width="40" height="40" viewBox="0 0 24 24" fill="#f1f3f4"><path d="M17.65 6.35C16.2 4.9 14.21 4 12 4c-4.42 0-7.99 3.58-7.99 8s3.57 8 7.99 8c3.73 0 6.84-2.55 7.73-6h-2.08c-.82 2.33-3.04 4-5.65 4-3.31 0-6-2.69-6-6s2.69-6 6-6c1.66 0 3.14.69 4.22 1.78L13 11h7V4l-2.35 2.35z" /></svg></button>
        <div class="omnibox">
          <svg width="16" height="22" viewBox="0 0 16 22"><rect y="8" width="16" height="14" rx="2" fill="#e8eaed" /><path d="M4 9V5a4 4 0 0 1 8 0v4" fill="none" stroke="#e8eaed" stroke-width="2" /></svg>
          <span class="url">skreet-art.herokuapp.com<span>/upload</span></span>
          <button aria-label="Zoom"><svg width="28" height="28" viewBox="0 0 28 28" fill="none" stroke="#bdc1c6" stroke-width="3"><circle cx="11" cy="11" r="9" /><path d="M18 18l8 8M7 11h8" /></svg></button>
          <button aria-label="Bookmark"><svg width="36" height="36" viewBox="0 0 24 24" fill="#c8cbcf"><path d="M22 9.24l-7.19-.62L12 2 9.19 8.63 2 9.24l5.46 4.73L5.82 21 12 17.27 18.18 21l-1.63-7.03L22 9.24zM12 15.4l-3.76 2.27 1-4.28-3.32-2.88 4.38-.38L12 6.1l1.71 4.04 4.38.38-3.32 2.88 1 4.28L12 15.4z" /></svg></button>
        </div>
        <div class="extensions">
          <svg width="32" height="32" viewBox="0 0 32 32"><path d="M16 0q7 4 14 3v13q-1 11-14 16Q3 27 2 16V3q7 1 14-3z" fill="#800509" stroke="#a55" /><path d="M9 11v6a3 3 0 0 0 6 0v-6" fill="none" stroke="#fff" stroke-width="2" /><circle cx="20" cy="16" r="4" fill="none" stroke="#fff" stroke-width="2" /></svg>
          <svg width="32" height="32" viewBox="0 0 32 32"><path d="M4 12a11 10 0 0 1 22 0v18l-5-3-5 4-4-3-4 3-4-2z" fill="#17a9ec" /><ellipse cx="12" cy="11" rx="2" ry="3" fill="#fff" /><ellipse cx="19" cy="11" rx="2" ry="3" fill="#fff" /><path d="M10 17q5 5 11 0" fill="none" stroke="#fff" stroke-width="2" /><path d="M23 16l2 6h6l-5 4 2 6-5-3-6 3 2-6-4-4h6z" fill="#86129a" /></svg>
          <svg width="32" height="32" viewBox="0 0 32 32"><path d="M0 9h10V3l22 13-22 13v-6H0z" fill="#f77" /><path d="M0 12h8v8H0z" fill="#fcc" /><path d="M9 11h13v3l4-3v10l-4-3v3H9z" fill="#fff" /></svg>
          <svg width="32" height="32" viewBox="0 0 32 32"><rect x="1" y="1" width="30" height="30" rx="5" fill="#555759" stroke="#f1f1f1" stroke-width="2" /><circle cx="9" cy="22" r="5" fill="#333" stroke="#f1f1f1" stroke-width="2" /><circle cx="23" cy="22" r="5" fill="#333" stroke="#f1f1f1" stroke-width="2" /></svg>
          <svg width="32" height="32" viewBox="0 0 32 32"><path d="M2 2h28v20H12l-4 4v-4H2z" fill="#b9b9b9" /><text x="16" y="17" class="css-text">CSS</text><path d="M18 21l4 5 8-9" fill="none" stroke="#8a8a8a" stroke-width="4" /></svg>
          <svg width="32" height="32" viewBox="0 0 32 32"><path d="M18 2h9v6h-9z" fill="#6b8de0" /><rect y="6" width="32" height="23" rx="3" fill="#6b8de0" /><circle cx="16" cy="18" r="6" fill="none" stroke="#fff" stroke-width="3" /><path d="M4 10h4v3H4zM19 3h5v2h-5z" fill="#fff" /></svg>
        </div>
        <div class="profile">
          <svg width="40" height="40" viewBox="0 0 40 40"><circle cx="20" cy="20" r="20" fill="#dcdcdc" /><path d="M17 7l3 3q9 2 13 10 4 8 2 14-5 5-13 6-6 0-8-2l3-12-5 1-6 4-4-3 3-8 8-7z" fill="#7c4a1f" /><path d="M20 10q11 3 14 14l2 8-4-3Q30 18 20 12z" fill="#3d2413" /><path d="M5 22l5 1-1 6-5-1z" fill="#3a2a22" /></svg>
          <svg width="32" height="32" viewBox="0 0 32 32"><circle cx="16" cy="16" r="16" fill="#9b9b9b" /><path d="M16 8l8 9h-4v7h-8v-7H8z" fill="#fff" /></svg>
        </div>
      </div>

      <nav class="bookmarks" aria-label="Bookmarks">
        <a href="#" class="apps">
          <svg width="26" height="26" viewBox="0 0 26 26">
            <path d="M0 0h6v6H0zM10 0h6v6h-6zM20 0h6v6h-6z" fill="#ee4136" />
            <path d="M0 10h6v6H0zM0 20h6v6H0z" fill="#35a060" /><path d="M10 10h6v6h-6z" fill="#2b8cf0" />
            <path d="M20 10h6v6h-6zM10 20h6v6h-6zM20 20h6v6h-6z" fill="#f5a623" />
          </svg>
          Apps
        </a>
        <a href="#">
          <svg class="folder" width="32" height="26" viewBox="0 0 32 26"><path d="M1 3q0-2 2-2h7l3 3h16q2 0 2 2v17q0 2-2 2H3q-2 0-2-2z" /><path d="M1 8h30" /></svg>
          Imported From Fir...
        </a>
        <a href="#">
          <svg width="32" height="32" viewBox="0 0 32 32"><path d="M0 3l6-2 6 7 4 1 4 9 5 5 6 8-4 1-6-7-5-2-5-8-7-5z" fill="#000" /></svg>
          Cracking a WPA/...
        </a>
        <a href="#" class="late">
          <svg class="folder" width="32" height="26" viewBox="0 0 32 26"><path d="M1 3q0-2 2-2h7l3 3h16q2 0 2 2v17q0 2-2 2H3q-2 0-2-2z" /><path d="M1 8h30" /></svg>
          Imported From Fir...
        </a>
        <a href="#">
          <svg class="folder" width="32" height="26" viewBox="0 0 32 26"><path d="M1 3q0-2 2-2h7l3 3h16q2 0 2 2v17q0 2-2 2H3q-2 0-2-2z" /><path d="M1 8h30" /></svg>
          Imported
        </a>
        <a href="#" class="other">
          <svg class="folder" width="32" height="26" viewBox="0 0 32 26"><path d="M1 3q0-2 2-2h7l3 3h16q2 0 2 2v17q0 2-2 2H3q-2 0-2-2z" /><path d="M1 8h30" /></svg>
          Other Bookmarks
        </a>
      </nav>
    </header>

    <div class="viewport">
      <aside class="sidebar">
        <svg class="logo" width="182" height="170" viewBox="0 0 182 170" fill="none" stroke="#5a8718" stroke-width="8">
          <rect x="56" y="4" width="70" height="35" rx="7" />
          <path d="M76 40v12M106 40v12M18 58V46h14v12M150 58V46h14v12" />
          <path d="M66 59H12q-8 0-8 8v84q0 8 8 8h54M116 59h54q8 0 8 8v84q0 8-8 8h-54" />
          <path d="M4 81h38M140 81h38M4 137h36M142 137h36" />
          <circle cx="91" cy="110" r="56" />
          <circle cx="91" cy="110" r="42" />
          <path d="M104 85q14 7 15 24" stroke-linecap="round" />
          <g fill="#5a8718" stroke="none"><circle cx="91" cy="81" r="4" /><circle cx="164" cy="95" r="4" /><rect x="108" y="14" width="8" height="15" rx="4" /></g>
        </svg>
        <h1>sKreet Art</h1>
        <nav class="menu" aria-label="Main">
          <a v-for="link in navLinks" :key="link" href="#" :class="{ current: link === current }">{{ link }}</a>
        </nav>
        <div class="repo">
          <p>Check out our Repo!</p>
          <div class="social">
            <a href="#" aria-label="GitHub repository"><svg width="28" height="28" viewBox="0 0 16 16" fill="#f0e587"><path :d="githubPath" /></svg></a>
          </div>
        </div>
      </aside>

      <main>
        <section class="map" aria-label="Map">
          <svg class="canvas" viewBox="0 0 2280 720" preserveAspectRatio="xMidYMid slice">
            <template v-for="layer in layers" :key="layer">
              <g v-for="tile in tiles" :key="tile.id" :transform="`translate(${tile.x} 0) scale(${tile.scale} ${TILE_Y})`">
                <path :class="layer" :d="tile[layer]" />
              </g>
            </template>
            <template v-for="[source, style] in trafficLayers" :key="style">
              <g v-for="tile in tiles" :key="tile.id" :transform="`translate(${tile.x} 0) scale(${tile.scale} ${TILE_Y})`">
                <path :class="style" :d="tile[source]" />
              </g>
            </template>

            <path id="river-name" d="M508,253 Q550,230 620,231" fill="none" />
            <text class="river-label"><textPath href="#river-name">James River</textPath></text>

            <text
              v-for="label in labels"
              :key="label.lines[0] + label.tile"
              :class="['label', label.kind]"
              :text-anchor="label.anchor ?? 'middle'"
            >
              <tspan
                v-for="(line, i) in label.lines"
                :key="line"
                :x="place(label.tile, label.x, label.y)[0]"
                :y="place(label.tile, label.x, label.y)[1] + i * (label.kind === 'area' ? 17 : 24)"
              >{{ line }}</tspan>
            </text>

            <g v-for="(s, i) in shields" :key="i" :transform="shieldTransform(s)" :class="['shield', s.kind]">
              <rect v-if="s.kind === 'state'" :x="-shieldWidth(s) / 2" y="-12" :width="shieldWidth(s)" height="24" rx="11" />
              <path v-else-if="s.kind === 'us'" :d="usPath(shieldWidth(s))" />
              <template v-else>
                <path class="top" :d="interstateTop(shieldWidth(s))" />
                <path class="body" :d="interstateBody(shieldWidth(s))" />
              </template>
              <text v-if="s.text" y="7">{{ s.text }}</text>
            </g>

            <g v-for="(pin, i) in pins" :key="'pin' + i" :transform="`translate(${place(pin.tile, pin.x, pin.y).join(' ')})`">
              <path d="M0,0Q-3,-9 -9,-14A14,14 0 1 1 9,-14Q3,-9 0,0z" :fill="pin.color" />
              <circle v-if="pin.icon === 'dot'" cy="-23" r="6" fill="#fff" />
              <path v-else-if="pin.icon === 'museum'" d="M-8,-25L0,-30 8,-25V-23H-8zM-6,-22h2v6h-2zM4,-22h2v6h-2zM-2,-22h1l1,2 1,-2h1v6h-1v-3l-1,2 -1,-2v3h-1zM-8,-16H8v2H-8z" fill="#fff" />
              <path v-else-if="pin.icon === 'camera'" d="M-6,-26h4l1,-2h5l1,2h3v10h-14v-7h3zM-8,-28h2v-2h1v2h2v1h-2v2h-1v-2h-2z" fill="#fff" />
              <circle v-if="pin.icon === 'camera'" cx="2" cy="-21" r="3" :fill="pin.color" />
            </g>
          </svg>

          <div class="map-type">
            <select v-model="mapType" aria-label="Map type">
              <option>Map</option>
              <option>Satellite</option>
            </select>
            <svg width="14" height="7" viewBox="0 0 14 7"><path d="M0 0h14L7 7z" fill="#666" /></svg>
          </div>
          <input v-model="search" class="search" type="text" placeholder="Search Box" aria-label="Search Box" />
          <div class="controls">
            <button class="fullscreen" aria-label="Toggle fullscreen">
              <svg width="32" height="32" viewBox="0 0 32 32" fill="none" stroke="#666" stroke-width="4"><path d="M2 11V2h9M21 2h9v9M30 21v9h-9M11 30H2v-9" /></svg>
            </button>
            <button class="pegman" aria-label="Street View">
              <svg width="30" height="54" viewBox="0 0 30 54" stroke="#8a7358" stroke-width="1"><path d="M8 18h14q3 0 4 4l4 15-4 3-3-7-1 20h-6l-1-13-1 13H8L7 33l-3 7-4-3 4-15q1-4 4-4z" fill="#fbbd3f" /><path d="M9 19h12l-6 9z" fill="#e58a3c" stroke="none" /><circle cx="15" cy="9" r="9" fill="#fbbd3f" /></svg>
            </button>
            <div class="zoom">
              <button aria-label="Zoom in"><svg width="32" height="32" viewBox="0 0 32 32"><path d="M16 0v32M0 16h32" stroke="#666" stroke-width="7" /></svg></button>
              <button aria-label="Zoom out"><svg width="32" height="32" viewBox="0 0 32 32"><path d="M0 16h32" stroke="#666" stroke-width="7" /></svg></button>
            </div>
          </div>
          <a href="#" class="google" aria-label="Google"><span>G</span><span>o</span><span>o</span><span>g</span><span>l</span><span>e</span></a>
          <div class="attribution">
            <span>Map data ©2019</span>
            <a href="#">Terms of Use</a>
            <a href="#">Report a map error</a>
          </div>
        </section>

        <form class="steps" @submit.prevent>
          <section>
            <h2>1 - Click the map to drop a pin</h2>
            <p>The pins location should be as close as possible to the actual location of the street art. We want to know what side of the building the piece is on. Be specific!</p>
          </section>
          <section>
            <h2><label for="art-file">2 - Choose Image</label></h2>
            <input id="art-file" type="file" />
          </section>
          <section>
            <h2>3 - Submit results!</h2>
            <button type="submit">Submit</button>
          </section>
        </form>
      </main>

      <div class="scrollbar"><div></div></div>

      <div class="overlay">
        <svg class="preview" width="304" height="91" viewBox="0 0 304 91">
          <rect x="4" y="4" width="296" height="83" rx="4" fill="#f5f6e0" stroke="#000" stroke-width="8" />
          <g class="preview-title"><text x="10" y="16">1 - Click the map to drop a pin</text><text x="10" y="43">2 - Choose Image</text><text x="10" y="67">3 - Submit results!</text></g>
          <g class="preview-text"><text x="21" y="24">The pins location should be as close as possible to the actual location of the street art. We want to know what side of the building the piece is</text><text x="21" y="28">on. Be specific!</text></g>
          <rect x="21" y="47" width="220" height="7" rx="3" fill="none" stroke="#8fd09d" />
          <rect x="24" y="48" width="22" height="5" fill="#fff" />
          <g class="preview-text"><text x="25" y="52" class="ink">Choose File</text><text x="47" y="52" class="green">No file chosen</text></g>
          <rect x="22" y="71" width="19" height="8" rx="4" fill="none" stroke="#8fd09d" />
          <text class="preview-text green" x="25" y="77">Submit</text>
        </svg>
        <button class="counter">0</button>
      </div>
    </div>
  </div>
</template>

<style>
body {
  background: #f5f6e0;
}
</style>

<style scoped>
* {
  box-sizing: border-box;
}
.browser {
  display: flex;
  flex-direction: column;
  min-height: 100vh;
  background: #f5f6e0;
  font-family: Inter, 'Liberation Sans', sans-serif;
}
svg {
  display: block;
  flex: none;
}
button {
  display: flex;
  align-items: center;
  justify-content: center;
  margin: 0;
  padding: 0;
  border: 0;
  background: none;
  font: inherit;
  color: inherit;
}
a {
  color: inherit;
  text-decoration: none;
}

/* Browser frame */
.chrome {
  background: #323639;
  border-bottom: 2px solid #232629;
  color: #f1f3f4;
}
.tabs {
  display: flex;
  align-items: center;
  height: 84px;
  padding: 16px 0 0 16px;
  background: #202124;
}
.pinned {
  display: flex;
  align-items: center;
  justify-content: center;
  width: 77px;
  height: 40px;
  border-right: 2px solid #55585c;
}
.letter-icon {
  width: 32px;
  height: 32px;
  border-radius: 50%;
  background: #3d3d3d;
  color: #f4f4f4;
  font: 30px/26px 'Liberation Serif', serif;
  text-align: center;
}
.tab {
  display: flex;
  align-items: center;
  gap: 14px;
  width: 477px;
  height: 68px;
  padding: 0 22px;
  font-size: 24px;
  color: #bdc1c6;
}
.tab span {
  flex: 1;
}
.tab button svg {
  fill: none;
  stroke: #9a9da1;
  stroke-width: 3;
}
.tab.first {
  height: 40px;
  border-right: 2px solid #55585c;
}
.tab.active {
  position: relative;
  width: 480px;
  padding-right: 24px;
  border-radius: 16px 16px 0 0;
  background: #323639;
  color: #f1f3f4;
}
.tab.active button svg {
  stroke: #c8cbcf;
}
.tab.active::before,
.tab.active::after {
  content: '';
  position: absolute;
  bottom: 0;
  width: 16px;
  height: 16px;
}
.tab.active::before {
  right: 100%;
  background: radial-gradient(circle at 0 0, #202124 16px, #323639 16px);
}
.tab.active::after {
  left: 100%;
  background: radial-gradient(circle at 100% 0, #202124 16px, #323639 16px);
}
.new-tab {
  margin-left: 32px;
}
.toolbar {
  display: flex;
  align-items: center;
  gap: 24px;
  height: 72px;
  padding: 0 28px 0 24px;
}
.omnibox {
  display: flex;
  align-items: center;
  gap: 24px;
  flex: 1;
  height: 56px;
  padding: 0 16px 0 28px;
  border-radius: 28px;
  background: #282c2f;
  font-size: 28px;
}
.url {
  flex: 1;
}
.url span {
  color: #9aa0a6;
}
.omnibox button {
  width: 40px;
}
.extensions {
  display: flex;
  gap: 32px;
  padding: 0 28px 0 4px;
  border-right: 2px solid #5f6368;
}
.css-text {
  font: bold 13px 'Liberation Sans', sans-serif;
  fill: #fff;
  text-anchor: middle;
}
.profile {
  display: flex;
  align-items: center;
  gap: 28px;
}
.bookmarks {
  display: flex;
  align-items: center;
  gap: 34px;
  height: 64px;
  padding: 0 30px 8px;
  font-size: 24px;
}
.bookmarks a {
  display: flex;
  align-items: center;
  gap: 16px;
}
.bookmarks .apps {
  gap: 18px;
}
.folder {
  fill: #6d7175;
  stroke: #fff;
  stroke-width: 2;
}
.bookmarks .late {
  margin-left: 16px;
}
.bookmarks .other {
  height: 32px;
  margin-left: auto;
  padding-left: 20px;
  border-left: 1px solid #5f6368;
}

/* Page */
.viewport {
  position: relative;
  display: flex;
  flex: 1;
}
.sidebar {
  display: flex;
  flex-direction: column;
  align-items: center;
  flex: 1;
  padding: 105px 0 72px;
  text-align: center;
}
h1 {
  margin: 14px 0 0;
  font-size: 43px;
  line-height: 52px;
  font-weight: 800;
  color: #5a8718;
}
.menu {
  display: flex;
  flex-direction: column;
  align-items: center;
  gap: 41px;
  margin-top: 121px;
  font-size: 30px;
  line-height: 36px;
  font-weight: 700;
  color: #6f9139;
}
.menu .current {
  padding-bottom: 5px;
  border-bottom: 2px solid #35631a;
  color: #35631a;
}
.repo {
  display: flex;
  flex-direction: column;
  gap: 40px;
  margin-top: auto;
}
.repo p {
  margin: 0;
  font-size: 30px;
  line-height: 36px;
  font-weight: 600;
  color: #5a8718;
}
.social {
  display: flex;
  justify-content: center;
  padding-left: 18px;
}
.social a {
  display: flex;
  justify-content: center;
  width: 72px;
  height: 72px;
  padding-top: 20px;
  border-radius: 50%;
  background: #35631a;
}
main {
  flex: 4;
  min-width: 0;
}

/* Map */
.map {
  position: relative;
  height: 720px;
  overflow: hidden;
  background: #e8e8e8;
  font-family: Roboto, sans-serif;
}
.canvas {
  width: 100%;
  height: 100%;
}
.canvas path {
  stroke-linejoin: round;
}
.rural { fill: #ebe9e5; }
.dark { fill: #e2e2e4; }
.parks { fill: #c5ebbb; }
.pale { fill: #d7efcf; }
.commercial { fill: #fdf3dc; }
.medical { fill: #faeaec; }
.river,
.lakes { fill: #aadaff; }
.rails,
.streams,
.streets,
.roads,
.highway,
.highway-casing,
.freeway,
.freeway-casing,
.freeway-line {
  fill: none;
  vector-effect: non-scaling-stroke;
}
.rails { stroke: #d6d8dc; stroke-width: 2px; }
.streams { stroke: #aadaff; stroke-width: 2px; }
.streets { stroke: #fafafa; stroke-width: 2px; }
.roads { stroke: #fff; stroke-width: 4px; }
.highway-casing { stroke: #f6cf72; stroke-width: 8px; }
.highway { stroke: #ffe7a3; stroke-width: 5px; }
.freeway-casing { stroke: #f6cf72; stroke-width: 12px; }
.freeway { stroke: #ffe39a; stroke-width: 8px; }
.freeway-line { stroke: #f9d989; stroke-width: 1px; }
.river-label {
  font-size: 18px;
  fill: #4a7fcb;
}
.label {
  font-size: 24px;
  paint-order: stroke;
  stroke: #fff;
  stroke-width: 4px;
  stroke-linejoin: round;
}
.town { fill: #565a60; }
.city { font-size: 30px; font-weight: 500; fill: #44484d; }
.area { font-size: 17px; font-weight: 500; letter-spacing: 2px; fill: #8d9cb8; }
.poi { fill: #68808d; }
.teal { font-size: 23px; fill: #17868f; }
.park { fill: #1f8a35; }
.shield text {
  font-size: 18px;
  text-anchor: middle;
  fill: #444;
}
.state rect,
.us path {
  fill: #fff;
  stroke: #6c6c6c;
  stroke-width: 2px;
}
.top { fill: #d95c5c; }
.body { fill: #3d78c4; }
.shield.interstate text {
  font-weight: 700;
  fill: #fff;
}
.map-type {
  position: absolute;
  top: 18px;
  left: 18px;
}
.map-type select {
  width: 216px;
  height: 66px;
  padding: 0 30px;
  border: 0;
  border-radius: 4px;
  background: #fff;
  box-shadow: 0 2px 6px rgba(0, 0, 0, 0.3);
  appearance: none;
  font: 600 32px Roboto, sans-serif;
  color: #000;
}
.map-type svg {
  position: absolute;
  top: 30px;
  right: 10px;
}
.search {
  position: absolute;
  top: 1px;
  left: 275px;
  width: 718px;
  height: 38px;
  padding: 0 24px;
  border: 1px solid #b5b5b5;
  background: #fff;
  font: 27px Roboto, sans-serif;
}
.search::placeholder {
  color: #757575;
}
.controls {
  position: absolute;
  top: 18px;
  right: 18px;
  bottom: 44px;
  display: flex;
  flex-direction: column;
  width: 72px;
}
.controls button {
  width: 72px;
  height: 72px;
}
.fullscreen,
.pegman,
.zoom {
  border-radius: 4px;
  background: #fff;
  box-shadow: 0 2px 6px rgba(0, 0, 0, 0.3);
}
.pegman {
  margin-top: auto;
}
.zoom {
  margin-top: 58px;
}
.google {
  position: absolute;
  left: 12px;
  bottom: 2px;
  font: 36px/44px Lato, sans-serif;
  text-shadow: 0 0 3px #fff, 0 0 3px #fff;
}
.google span:nth-child(3n + 1) { color: #4285f4; }
.google span:nth-child(2) { color: #ea4335; }
.google span:nth-child(3) { color: #fbbc05; }
.google span:nth-child(5) { color: #34a853; }
.google span:nth-child(6) { color: #ea4335; }
.attribution {
  position: absolute;
  right: 0;
  bottom: 0;
  display: flex;
  gap: 24px;
  height: 26px;
  padding: 0 11px 0 10px;
  background: rgba(245, 245, 245, 0.7);
  font-size: 18px;
  line-height: 26px;
  color: #333;
}

/* Upload steps */
.steps {
  display: flex;
  flex-direction: column;
  gap: 46px;
  padding: 46px 60px 60px 43px;
}
h2 {
  margin: 0 0 19px;
  font-size: 45px;
  line-height: 56px;
  font-weight: 500;
  color: #5a8718;
}
.steps p {
  margin: 0 0 15px 87px;
  font-size: 31px;
  line-height: 34px;
  font-weight: 500;
  color: #999;
}
.steps input {
  display: block;
  width: calc(78% - 8px);
  height: 62px;
  margin-left: 81px;
  padding: 6px 14px;
  border: 2px solid #34a853;
  border-radius: 31px;
  font: 26px/42px Inter, sans-serif;
  color: #34a853;
}
.steps input::file-selector-button {
  height: 46px;
  margin: 0 8px 0 0;
  padding: 0 13px;
  border: 2px solid #ccc;
  background: #fff;
  font: inherit;
  color: #222;
}
.steps button {
  width: 152px;
  height: 68px;
  margin-left: 87px;
  padding-bottom: 4px;
  border: 2px solid #34a853;
  border-radius: 34px;
  font-size: 31px;
  color: #34a853;
}
.scrollbar {
  width: 30px;
  padding: 6px 5px 0 6px;
  border: solid #e8e8e8;
  border-width: 0 2px;
  background: #fafafa;
}
.scrollbar div {
  height: 76%;
  border-radius: 8px;
  background: #c2c2c2;
}
.overlay {
  position: absolute;
  right: 48px;
  bottom: 24px;
  display: flex;
  align-items: flex-end;
  gap: 24px;
}
.preview {
  border-radius: 8px;
  box-shadow: 0 0 60px rgba(0, 0, 0, 0.2);
}
.preview-title {
  font-size: 6px;
  font-weight: 500;
  fill: #5a8718;
}
.preview-text {
  font-size: 4px;
  fill: #888;
}
.preview-text .ink {
  fill: #333;
}
.green {
  fill: #54b96c;
}
.counter {
  align-self: flex-start;
  width: 62px;
  height: 64px;
  margin: -7px 0 0;
  border-radius: 50%;
  background: #651a65;
  box-shadow: 0 4px 12px rgba(0, 0, 0, 0.2);
  font: 700 29px Roboto, sans-serif;
  color: #fff;
}
</style>
